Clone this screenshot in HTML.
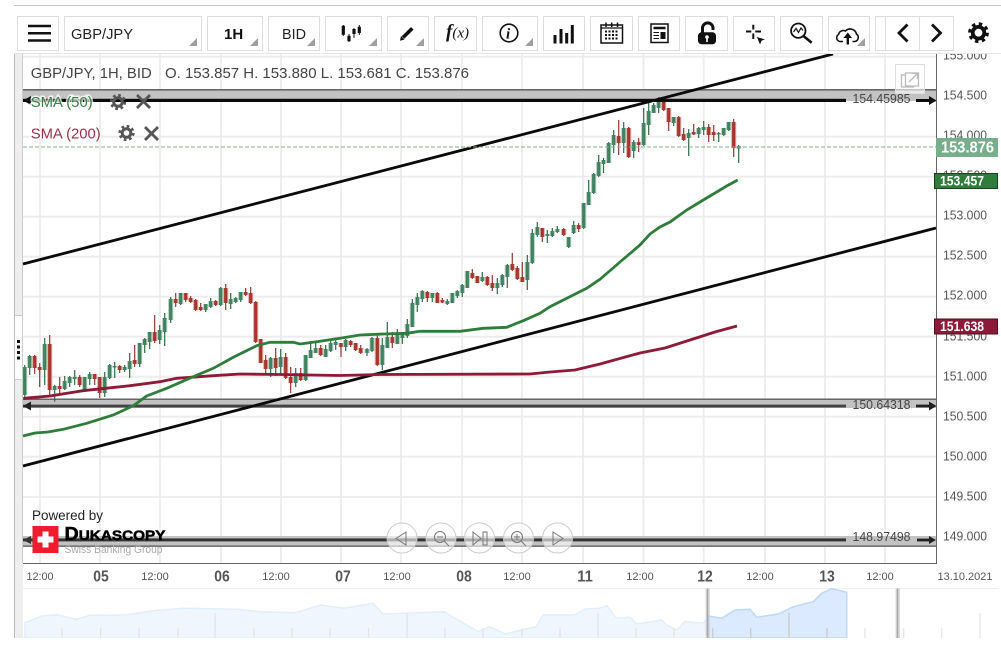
<!DOCTYPE html>
<html><head><meta charset="utf-8"><title>GBP/JPY chart</title>
<style>
html,body{margin:0;padding:0;background:#fff;width:1001px;height:649px;overflow:hidden}
svg{display:block}
text{font-family:"Liberation Sans",sans-serif}
.ax{font-size:13px;fill:#555}
.tm{font-size:11px;fill:#555;text-anchor:middle}
.dy{font-size:15.5px;font-weight:bold;fill:#555;text-anchor:middle}
.btn{fill:#fff;stroke:#ddd;stroke-width:1}
.tri{fill:#a0a0a0}
.nav{fill:rgba(255,255,255,.6);stroke:#ccc;stroke-width:1}
.ni{fill:none;stroke:#777;stroke-width:1}
.lg{paint-order:stroke;stroke:rgba(255,255,255,.75);stroke-width:3px}
</style></head><body>
<svg width="1001" height="649" viewBox="0 0 1001 649" xmlns="http://www.w3.org/2000/svg">
<defs>
<path id="gb" d="M24.7 367V395M29.7 356V368M44.7 344V370M54.7 386V390M64.7 381V389M69.7 377V383M74.7 377V379M84.7 377V391M89.7 374V379M104.7 377V393M109.7 365V378M114.7 366V367.5M124.7 367V370M129.7 361V369M139.7 343V364M144.7 339V345M149.7 332V342M159.7 330V340M164.7 318V332M170.7 299V320M180.7 293V304M205.7 304V310M210.7 301V307M220.7 288V305M230.7 299V304M235.7 298V302M240.7 292V300M270.7 358V369M280.7 357V367M295.7 373V383M305.7 355V380M310.7 350V358M315.7 348V353M325.7 349V357M330.7 343V351M335.7 342V345M345.7 340V347M367 349V353M372 338V351M382.3 345V365M387.3 337V348M397.3 335V344M402.3 334V338M407.3 324V336M412.3 303V327M417.3 297V305M422.3 291V299M432.3 293V298M447.3 301V304M452.3 293V303M457.3 291V296M462.3 285V293M467.3 271V288M482.3 277V281M497.3 283V288M502.3 275V285M507.3 265V277M527.3 262V280M532.3 233V263M537.3 227V235M547.3 234V236M552.3 231V236M557.3 229V232M568.7 237V247M573.7 225V233M583.7 203V228M588.7 192V205M593.7 174V193M598.7 162V176M603.5 160V164M608.7 143V163M613.7 135V145M623.7 128V143M633.7 142V151M643.7 123V145M648.7 111V125M653.7 105V113M658.7 102V108M673.7 117V123M688.7 133V138M698.7 128V134M703.7 127V130M718.7 133V134.5M723.7 128V135M728.7 122V130M738.7 146V148.5"/>
<path id="rb" d="M34.7 356V368M39.7 367V370M49.7 344V390M59.7 386V389M79.7 377V385M94.7 374V379M99.7 377V393M119.7 366V370M134.7 360V364M154.7 332V341M175.7 299V303M185.7 293V300M190.7 298V302M195.7 300V310M200.7 307V310M215.7 301V305M225.7 288V303M245.7 292V295M250.7 293V303M255.7 302V342M260.7 339V363M265.7 360V369M275.7 358V368M285.7 357V378M290.7 377V383M300.7 373V380M320.7 348V355M341 343V347M350.7 341V345M355.7 343V350M360.7 348V353M377.3 338V365M392.3 337V343M427.3 292V298M437.3 293V303M442.3 300V302.5M472.3 273V278M477.3 276V283M487.3 277V285M492.3 283V288M512.3 264V270M517.3 268V279M522.3 277V282M542.3 228V237M563.7 229V235M578.7 225V229M618.7 136V143M628.7 128V157M638.7 142V145M663.7 102V110M668.7 108V122M678.7 117V136M683.7 134V140M693.7 132V134.5M708.7 127V135M713.7 132V135M733.7 122V148"/>
</defs>
<rect width="1001" height="649" fill="#fff"/>
<!-- top rule -->
<rect x="14" y="5" width="987" height="1" fill="#c8c8c8"/>

<!-- grid -->
<g stroke="#ececec" stroke-width="1.8" fill="none">
<path d="M40 54V563M100 54V563M160 54V563M221 54V563M281 54V563M341 54V563M401 54V563M462 54V563M522 54V563M583 54V563M643.5 54V563M703.7 54V563M765 54V563M825 54V563M885 54V563"/>
<path d="M23 56.7H936M23 96.7H936M23 136.7H936M23 176.7H936M23 216.7H936M23 256.7H936M23 296.7H936M23 336.7H936M23 376.7H936M23 416.7H936M23 456.7H936M23 497H936M23 537H936"/>
</g>

<!-- left strip -->
<rect x="14" y="54" width="9" height="584" fill="#eee"/>
<rect x="14.5" y="316" width="8" height="63" fill="#fff"/>
<path d="M14.5 54V638" stroke="#bbb" stroke-width="1" fill="none"/>
<path d="M22.5 54V563" stroke="#ccc" stroke-width="1" fill="none"/>
<path d="M14.5 315.5H22M14.5 379.5H22" stroke="#ccc" stroke-width="1"/>
<g fill="#111"><rect x="17" y="340" width="3" height="3"/><rect x="17" y="345.5" width="3" height="3"/><rect x="17" y="351" width="3" height="3"/><rect x="17" y="356.5" width="3" height="3"/></g>

<!-- price axis labels -->
<g>
<text class="ax" x="943" y="59.5" textLength="44" lengthAdjust="spacingAndGlyphs">155.000</text>
<text class="ax" x="943" y="99.5" textLength="44" lengthAdjust="spacingAndGlyphs">154.500</text>
<text class="ax" x="943" y="139.5" textLength="44" lengthAdjust="spacingAndGlyphs">154.000</text>
<text class="ax" x="943" y="179.5" textLength="44" lengthAdjust="spacingAndGlyphs">153.500</text>
<text class="ax" x="943" y="219.5" textLength="44" lengthAdjust="spacingAndGlyphs">153.000</text>
<text class="ax" x="943" y="259.5" textLength="44" lengthAdjust="spacingAndGlyphs">152.500</text>
<text class="ax" x="943" y="299.5" textLength="44" lengthAdjust="spacingAndGlyphs">152.000</text>
<text class="ax" x="943" y="340.5" textLength="44" lengthAdjust="spacingAndGlyphs">151.500</text>
<text class="ax" x="943" y="380.5" textLength="44" lengthAdjust="spacingAndGlyphs">151.000</text>
<text class="ax" x="943" y="420.5" textLength="44" lengthAdjust="spacingAndGlyphs">150.500</text>
<text class="ax" x="943" y="460.5" textLength="44" lengthAdjust="spacingAndGlyphs">150.000</text>
<text class="ax" x="943" y="500.5" textLength="44" lengthAdjust="spacingAndGlyphs">149.500</text>
<text class="ax" x="943" y="540.5" textLength="44" lengthAdjust="spacingAndGlyphs">149.000</text>
</g>

<!-- horizontal bands -->
<rect x="23" y="89" width="913" height="13" fill="#c2c2c2"/>
<rect x="23" y="89" width="913" height="1.6" fill="#666"/>
<rect x="23" y="399" width="913" height="9" fill="#c2c2c2"/>
<rect x="23" y="398.5" width="913" height="1.5" fill="#666"/>
<rect x="23" y="536" width="913" height="11" fill="#c2c2c2"/>
<rect x="23" y="545.3" width="913" height="1.7" fill="#777"/>

<!-- candles -->
<g fill="none">
<path stroke="#2e6b47" stroke-width="1.2" d="M24.7 365V396.7M29.7 355V375M44.7 338V385M54.7 385V401.7M64.7 376V390M69.7 376V387M74.7 370V385M84.7 377V392M89.7 372V385M104.7 372V397M109.7 364V379M114.7 362V378M124.7 365V372M129.7 353V378M139.7 343V367M144.7 338V353M149.7 332V349M159.7 325V344M164.7 313V346M170.7 297V323M180.7 293V305M205.7 304V312M210.7 298V308M220.7 287V306M230.7 293V309M235.7 297V303M240.7 292V302M270.7 357V377M280.7 349V375M295.7 368V387M305.7 355V381M310.7 341V358M315.7 343V353M325.7 345V357M330.7 340V352M335.7 338V350M345.7 339V351M367 348V356M372 337V352M382.3 338V370M387.3 322V348M397.3 329V344M402.3 332V344M407.3 319V338M412.3 299V327M417.3 293V312M422.3 290V302M432.3 293V302M447.3 299V305M452.3 293V303M457.3 290V298M462.3 284V297M467.3 271V288M482.3 272V282M497.3 278V294M502.3 274V287M507.3 264V288M527.3 255V290M532.3 229V264M537.3 222V237M547.3 230V243M552.3 228V237M557.3 226V233M568.7 237V248M573.7 221V234M583.7 203V229M588.7 180V205M593.7 173V194M598.7 155V177M603.5 158V173M608.7 142V163M613.7 130V153M623.7 122V153M633.7 140V158M643.7 108V146M648.7 103V135M653.7 103V113M658.7 97V113M673.7 117V126M688.7 129V156M698.7 127V138M703.7 121V135M718.7 132V142M723.7 128V136M728.7 122V131M738.7 145V163"/>
<path stroke="#8a3a32" stroke-width="1.2" d="M34.7 355V374M39.7 363V387M49.7 335V395M59.7 377V393M79.7 375V387M94.7 374V385M99.7 377V398M119.7 365V373M134.7 345V367M154.7 315V343M175.7 293V307M185.7 293V302M190.7 296V303M195.7 299V311M200.7 303V311M215.7 300V306M225.7 284V310M245.7 288V296M250.7 287V304M255.7 301V343M260.7 339V363M265.7 355V373M275.7 348V376M285.7 353V379M290.7 367V393M300.7 368V381M320.7 345V356M341 343V357M350.7 340V347M355.7 343V351M360.7 345V354M377.3 333V366M392.3 332V348M427.3 291V302M437.3 292V303M442.3 298V303M472.3 269V279M477.3 276V283M487.3 276V286M492.3 275V291M512.3 253V271M517.3 266V280M522.3 262V282M542.3 228V242M563.7 228V236M578.7 223V232M618.7 120V155M628.7 127V158M638.7 138V152M663.7 100V111M668.7 108V131M678.7 116V137M683.7 128V141M693.7 124V135M708.7 124V142M713.7 125V141M733.7 119V157"/>
<use href="#gb" stroke="#b8d0c2" stroke-width="5.2"/>
<use href="#rb" stroke="#dcb5b0" stroke-width="5.2"/>
<use href="#gb" stroke="#3f8260" stroke-width="3.2"/>
<use href="#rb" stroke="#a8352b" stroke-width="3.2"/>
</g>

<!-- band dark lines -->
<rect x="23" y="98.8" width="823" height="3.2" fill="#0c0c0c"/>
<rect x="916" y="99" width="15" height="3" fill="#0c0c0c"/>
<rect x="846" y="101" width="70" height="2" fill="#fff"/>
<path d="M929 96L936.5 100.500L929 105Z" fill="#111"/>
<path d="M31 96L23 100.500L31 105Z" fill="#111"/>
<rect x="23" y="404.6" width="823" height="2.9" fill="#444"/>
<rect x="916" y="404.6" width="15" height="2.800" fill="#222"/>
<path d="M929 401.500L936.500 406L929 410.500Z" fill="#222"/>
<path d="M31 401.500L23 406L31 410.500Z" fill="#222"/>
<rect x="23" y="538.4" width="823" height="3" fill="#333"/>
<rect x="917" y="538.600" width="14" height="2.800" fill="#222"/>
<path d="M929 536L936 540L929 544Z" fill="#222"/>
<path d="M31 536L23 540L31 544Z" fill="#333"/>
<text x="852.500" y="103" font-size="13" fill="#444" textLength="58" lengthAdjust="spacingAndGlyphs">154.45985</text>
<text x="852.500" y="409" font-size="13" fill="#444" textLength="58" lengthAdjust="spacingAndGlyphs">150.64318</text>
<text x="852.500" y="541" font-size="13" fill="#444" textLength="58" lengthAdjust="spacingAndGlyphs">148.97498</text>

<!-- trend lines -->
<path d="M23 264L833 54" stroke="#0a0a0a" stroke-width="2.800" fill="none"/>
<path d="M23 466L936 228" stroke="#0a0a0a" stroke-width="2.800" fill="none"/>

<!-- dashed price line -->
<path d="M23 147H936" stroke="#7fb08f" stroke-width="1" stroke-dasharray="4 2" fill="none"/>

<!-- SMA 200 -->
<polyline fill="none" stroke="#8c1a38" stroke-width="2.800" points="23.3,398.3 50,396 83,390.7 130,385.7 160,381.7 176.7,378.3 213.3,375.7 240,374 280,374.5 340,375.5 380,374.5 530,374 550,372 575,370 600,364 640,353 665,348 690,340 715,332 737,326"/>
<!-- SMA 50 -->
<polyline fill="none" stroke="#2f7d3a" stroke-width="2.800" points="23,436 35,433 48,432 63.3,429.3 86.7,423.3 113.3,415 133.3,405.7 146.7,396 166.7,388.3 193.3,376.7 213.3,368.3 233.3,357.3 256.7,345.7 270,342.3 293.3,342.3 300,344 316.7,341.7 340,338.3 360,335 383,334 406.7,333.3 420,331.3 460,331.3 483.3,328.3 506.7,327.3 523.3,320.7 540,313.3 550,306.7 586.7,288.3 600,279.3 620,262 640,245 650,234 660,227 670,222 686.7,210 703.3,200 726.7,186 737.7,180"/>

<!-- axes -->
<path d="M936.5 54V563.5H23" stroke="#666" stroke-width="1" fill="none"/>
<path d="M23 588.5H998" stroke="#eee" stroke-width="1" fill="none"/>

<!-- tags -->
<rect x="936" y="138" width="62" height="19" fill="#77ae8c"/>
<text x="941" y="152.500" font-size="15.500" fill="#fff" font-weight="bold" textLength="53" lengthAdjust="spacingAndGlyphs">153.876</text>
<rect x="934.500" y="173.500" width="63" height="15" fill="#2e7d3a" stroke="#1d3d25"/>
<text x="940" y="185.500" font-size="14" fill="#fff" font-weight="bold" textLength="44" lengthAdjust="spacingAndGlyphs">153.457</text>
<rect x="934.500" y="319" width="63" height="15" fill="#8c1a38" stroke="#4a1020"/>
<text x="940" y="331" font-size="14" fill="#fff" font-weight="bold" textLength="44" lengthAdjust="spacingAndGlyphs">151.638</text>

<!-- header info -->
<text x="30.700" y="78" font-size="15" fill="#444" textLength="121" lengthAdjust="spacingAndGlyphs">GBP/JPY, 1H, BID</text>
<text x="165" y="78" font-size="15" fill="#444" textLength="304" lengthAdjust="spacingAndGlyphs">O. 153.857 H. 153.880 L. 153.681 C. 153.876</text>

<!-- legends -->
<text class="lg" x="30.700" y="107" font-size="15" fill="#3b8045" textLength="62" lengthAdjust="spacingAndGlyphs">SMA (50)</text>
<text class="lg" x="30.700" y="138.500" font-size="15" fill="#97304a" textLength="70" lengthAdjust="spacingAndGlyphs">SMA (200)</text>
<g fill="none" stroke="#555">
<circle cx="118" cy="102" r="4.300" stroke-width="3"/>
<circle cx="118" cy="102" r="6.800" stroke-width="2.600" stroke-dasharray="2.67 2.67"/>
<circle cx="126.500" cy="133" r="4.300" stroke-width="3"/>
<circle cx="126.500" cy="133" r="6.800" stroke-width="2.600" stroke-dasharray="2.67 2.67"/>
<path d="M137 95L150 108M150 95L137 108" stroke-width="2.800"/>
<path d="M145 127L158 140M158 127L145 140" stroke-width="2.800"/>
</g>

<!-- popout -->
<rect x="895.500" y="64.500" width="29" height="29" fill="rgba(255,255,255,.6)" stroke="#ddd"/>
<g fill="none" stroke="#bbb" stroke-width="1.300">
<rect x="901.500" y="75" width="12" height="12"/>
<rect x="905.500" y="73" width="13" height="13" fill="#fff"/>
<path d="M909 82L917 74M912 73.500H917.500V79"/>
</g>

<!-- x axis labels -->
<text class="tm" x="40" y="580" textLength="27" lengthAdjust="spacingAndGlyphs">12:00</text>
<text class="dy" x="101" y="581.500" textLength="15.500" lengthAdjust="spacingAndGlyphs">05</text>
<text class="tm" x="155" y="580">12:00</text>
<text class="dy" x="222" y="581.500" textLength="15.500" lengthAdjust="spacingAndGlyphs">06</text>
<text class="tm" x="276" y="580">12:00</text>
<text class="dy" x="343" y="581.500" textLength="15.500" lengthAdjust="spacingAndGlyphs">07</text>
<text class="tm" x="397" y="580">12:00</text>
<text class="dy" x="464" y="581.500" textLength="15.500" lengthAdjust="spacingAndGlyphs">08</text>
<text class="tm" x="517" y="580">12:00</text>
<text class="dy" x="585" y="581.500" textLength="15.500" lengthAdjust="spacingAndGlyphs">11</text>
<text class="tm" x="640" y="580">12:00</text>
<text class="dy" x="705" y="581.500" textLength="15.500" lengthAdjust="spacingAndGlyphs">12</text>
<text class="tm" x="760" y="580">12:00</text>
<text class="dy" x="827" y="581.500" textLength="15.500" lengthAdjust="spacingAndGlyphs">13</text>
<text class="tm" x="880" y="580">12:00</text>
<text class="tm" x="965" y="580">13.10.2021</text>

<!-- mini chart -->
<path fill="#f0f6fe" stroke="#e2eefc" stroke-width="1.500" d="M25 638V622.700L42 616L57 614.700L76.500 619.300L90 615.300L126 615L153 610.700L184 608.300L237 609.300L260 611.700L295 612.700L321 605L344 608.300L373 603.300L383 614L444 611.700L478 631.700L490 626.700L505 634L536 626.700L543 615L574 615L585.500 609L600 608.300L606.700 605.700L616.700 618.300L630 617.300L636.700 624L661.700 620L666.700 625L676.700 630L685 621.700L703.300 623.300L708.300 616V638Z"/>
<path fill="#dbeafe" stroke="#bcd8fb" stroke-width="1.500" d="M708.300 638V616L721.700 618.300L735 610L750 609.300L756.700 617.300L778.300 614L793.300 606.700L813.300 601.700L821.700 593.300L831.700 588.700L846.700 592.300V638Z"/>
<g stroke="#e3e3e3" stroke-width="1.200" fill="none">
<path d="M62 628V638M100.600 628V638M139 628V638M178 628V638M215 613V638M254 628V638M292 628V638M330 628V638M368.500 628V638M407 613V638M445 628V638M483 628V638M522 628V638M560 628V638M598 613V638M636 628V638M674 628V638M750.700 628V638M865 628V638M903.700 628V638M941.700 628V638M980 613V638"/>
</g>
<path d="M712.700 628V638M750.700 628V638M789 613V638M827 628V638" stroke="#ccc" stroke-width="1.400" fill="none"/>
<path d="M706.300 588.500V638M709 588.500V638M896.300 588.500V638M899 588.500V638" stroke="#c8c8c8" stroke-width="1.200" fill="none"/>
<path d="M707.600 588.500V638M897.600 588.500V638" stroke="#a8a8a8" stroke-width="1.200" fill="none"/>
<rect x="0" y="638" width="1001" height="11" fill="#fff"/>

<!-- nav controls -->
<circle class="nav" cx="402" cy="538" r="15"/>
<circle class="nav" cx="441" cy="538" r="15"/>
<circle class="nav" cx="479.500" cy="538" r="15"/>
<circle class="nav" cx="518.500" cy="538" r="15"/>
<circle class="nav" cx="557.500" cy="538" r="15"/>
<path class="ni" d="M406 532V545L396 538.500Z"/>
<circle class="ni" cx="440" cy="537" r="5.500"/><path class="ni" d="M437 537H443M444 541L449 546"/>
<path class="ni" d="M473 532L481 538.500L473 545ZM483 532H487V545H483Z"/>
<circle class="ni" cx="517" cy="537" r="5.500"/><path class="ni" d="M514 537H520M517 534V540M521 541L526 546"/>
<path class="ni" d="M553 532V545L563 538.500Z"/>

<!-- logo -->
<text x="32" y="520" font-size="13.500" fill="#222" textLength="71" lengthAdjust="spacingAndGlyphs">Powered by</text>
<rect x="32.500" y="526" width="26" height="27" fill="#ee1c2e"/>
<path d="M42.500 531.500H48.500V536.500H53.500V542.500H48.500V547.500H42.500V542.500H37.500V536.500H42.500Z" fill="#fff"/>
<text x="64.500" y="540" font-weight="bold" fill="#000" stroke="#000" stroke-width=".5" textLength="101" lengthAdjust="spacingAndGlyphs"><tspan font-size="18">D</tspan><tspan font-size="14">UKASCOPY</tspan></text>
<text x="64.500" y="553" font-size="11" fill="#aaa" textLength="98" lengthAdjust="spacingAndGlyphs">Swiss Banking Group</text>

<!-- toolbar -->
<rect x="14" y="6" width="987" height="47" fill="#fff"/>
<path d="M14 53.500H1001" stroke="#e6e6e6" stroke-width="1" fill="none"/>
<rect class="btn" x="17.500" y="16.500" width="41" height="34"/>
<rect class="btn" x="64.500" y="16.500" width="137" height="34"/>
<rect class="btn" x="207.500" y="16.500" width="55" height="34"/>
<rect class="btn" x="268.500" y="16.500" width="51" height="34"/>
<rect class="btn" x="325.500" y="16.500" width="56" height="34"/>
<rect class="btn" x="387.500" y="16.500" width="41" height="34"/>
<rect class="btn" x="434.500" y="16.500" width="42" height="34"/>
<rect class="btn" x="482.500" y="16.500" width="55" height="34"/>
<rect class="btn" x="543.500" y="16.500" width="41" height="34"/>
<rect class="btn" x="590.500" y="16.500" width="42" height="34"/>
<rect class="btn" x="638.500" y="16.500" width="41" height="34"/>
<rect class="btn" x="685.500" y="16.500" width="42" height="34"/>
<rect class="btn" x="733.500" y="16.500" width="41" height="34"/>
<rect class="btn" x="780.500" y="16.500" width="42" height="34"/>
<rect class="btn" x="828.500" y="16.500" width="41" height="34"/>
<rect class="btn" x="875.500" y="16.500" width="12" height="34"/>
<rect class="btn" x="885.500" y="16.500" width="68" height="34"/>
<path d="M919.500 16.500V50.500" stroke="#ddd" fill="none"/>
<!-- dropdown triangles -->
<path class="tri" d="M197 38V46H189Z"/>
<path class="tri" d="M258 38V46H250Z"/>
<path class="tri" d="M315 38V46H307Z"/>
<path class="tri" d="M377 38V46H369Z"/>
<path class="tri" d="M424 38V46H416Z"/>
<path class="tri" d="M533 38V46H525Z"/>
<path class="tri" d="M865 38V46H857Z"/>

<path d="M28 26H51M28 33.300H51M28 40.500H51" stroke="#111" stroke-width="2.500" fill="none"/>
<text x="71" y="39" font-size="14.500" fill="#222" textLength="62" lengthAdjust="spacingAndGlyphs">GBP/JPY</text>
<text x="224" y="39" font-size="15" font-weight="bold" fill="#111">1H</text>
<text x="282" y="39" font-size="15" fill="#222" textLength="24" lengthAdjust="spacingAndGlyphs">BID</text>
<!-- candle icon -->
<path d="M343.300 25V36M349 34V42M354 28V38M359.300 25V35" stroke="#111" stroke-width="1" fill="none"/>
<path d="M343.300 25.700V34.700M349 35.700V41.300M354 29V34M359.300 26.700V33" stroke="#111" stroke-width="3.200" fill="none"/>
<!-- pen -->
<path d="M403 37.500L412.300 28.300" stroke="#111" stroke-width="3.600" fill="none"/>
<path d="M400 40.700L401 36L404.500 39.500Z" fill="#111"/>
<!-- f(x) -->
<text x="446" y="37.500" font-style="italic" style="font-family:'Liberation Serif',serif" fill="#111"><tspan font-size="19" font-weight="bold">f</tspan><tspan font-size="15">(x)</tspan></text>
<!-- info -->
<circle cx="509" cy="33" r="8.800" fill="none" stroke="#111" stroke-width="1.600"/>
<text x="506" y="38.500" font-size="15" font-style="italic" font-weight="bold" style="font-family:'Liberation Serif',serif" fill="#111">i</text>
<!-- bars -->
<path d="M555 35V43.500M561 29V43.500M566.700 33V43.500M572.300 25V43.500" stroke="#111" stroke-width="3" fill="none"/>
<!-- calendar -->
<rect x="601" y="25" width="21.500" height="18" fill="#fff" stroke="#111" stroke-width="1.500"/>
<path d="M601 28H622.500" stroke="#111" stroke-width="1.200"/>
<path d="M606 22.500V27M611.700 22.500V27M617.500 22.500V27" stroke="#111" stroke-width="1.500"/>
<path d="M605 31.500H619M605 35H619M605 38.500H619" stroke="#111" stroke-width="2" stroke-dasharray="2 1.500" fill="none"/>
<!-- news -->
<rect x="651" y="24" width="17" height="18.500" fill="#fff" stroke="#111" stroke-width="1.500"/>
<path d="M653.500 28H665.500" stroke="#111" stroke-width="2.500"/>
<path d="M653.500 32.500H659M653.500 35.500H659M653.500 38.500H659" stroke="#111" stroke-width="1"/>
<rect x="660.500" y="32" width="5" height="7" fill="#111"/>
<!-- lock -->
<path d="M702.500 33V27.500A5.300 5.300 0 0 1 713 27.500V30" fill="none" stroke="#111" stroke-width="3"/>
<rect x="698" y="32.300" width="18" height="12" rx="3.500" fill="#111"/>
<circle cx="707" cy="37" r="1.800" fill="#fff"/>
<path d="M707 37.500V42" stroke="#fff" stroke-width="1.600"/>
<!-- crosshair -->
<path d="M746 31.500H751.300M755.300 31.500H761M753.300 24.700V29.500M753.300 33.500V39" stroke="#111" stroke-width="2" fill="none"/>
<path d="M757 37L765 39.500L761.500 40.700L760 44.500Z" fill="#111"/>
<!-- search chart -->
<circle cx="798.300" cy="30.700" r="7.200" fill="none" stroke="#111" stroke-width="1.800"/>
<path d="M803.500 36L811.700 42.700" stroke="#111" stroke-width="2.600" fill="none"/>
<path d="M793.500 32L796 28.500L798.500 32.500L801 28L803 30.500" stroke="#111" stroke-width="1.200" fill="none"/>
<!-- cloud -->
<path d="M843 41.500H841A3.800 3.800 0 0 1 838.500 34.500A5 5 0 0 1 845.500 31A6.500 6.500 0 0 1 856.500 34A4.200 4.200 0 0 1 855 41.500H852.500" fill="none" stroke="#111" stroke-width="1.600"/>
<path d="M847.800 44.500V36" stroke="#111" stroke-width="2.400"/>
<path d="M843.500 38L847.800 32.500L852 38Z" fill="#111"/>
<!-- arrows -->
<path d="M907.500 24.500L899 33L907.500 41.500" fill="none" stroke="#111" stroke-width="2.800"/>
<path d="M932 24.500L940.500 33L932 41.500" fill="none" stroke="#111" stroke-width="2.800"/>
<!-- gear -->
<circle cx="978.500" cy="32.700" r="5.800" fill="none" stroke="#111" stroke-width="3.800"/>
<circle cx="978.500" cy="32.700" r="8.800" fill="none" stroke="#111" stroke-width="3.200" stroke-dasharray="3.450 3.460"/>
</svg>
</body></html>
